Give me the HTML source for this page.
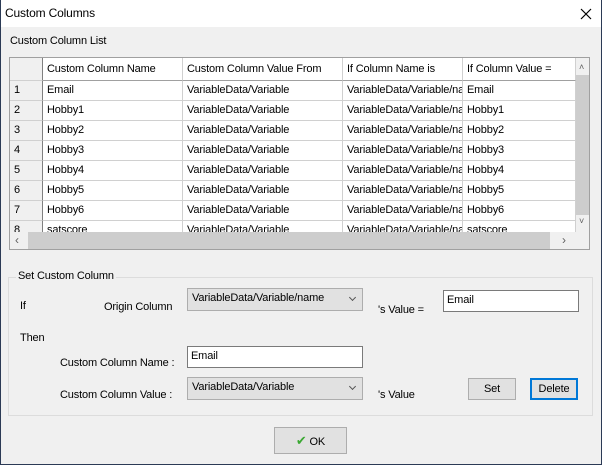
<!DOCTYPE html>
<html><head><style>
*{margin:0;padding:0;box-sizing:border-box}
body{width:602px;height:465px;background:#f0f0f0;font-family:"Liberation Sans",sans-serif;font-size:11px;letter-spacing:-0.15px;color:#000;position:relative;overflow:hidden}
.a{position:absolute;white-space:nowrap}
.win{position:absolute;left:0;top:0;width:602px;height:465px;border:1px solid #2b3a55;border-top:none}
.title{position:absolute;left:1px;top:0;width:600px;height:27px;background:#fff}
.grid{position:absolute;left:9px;top:57px;width:581px;height:193px;border:1px solid #a0a0a0;background:#fff;overflow:hidden}
.c{position:absolute;height:20px;line-height:19px;padding-left:4px;border-right:1px solid #d0d0d0;border-bottom:1px solid #d0d0d0;overflow:hidden;white-space:nowrap}
.h{background:#fff}
.rn{background:#f0f0f0;border-right:1px solid #808080}
.btn{position:absolute;background:#e1e1e1;border:1px solid #adadad;text-align:center}
.tb{position:absolute;background:#fff;border:1px solid #7a7a7a;padding-left:3px;line-height:18px}
.cb{position:absolute;background:#e1e1e1;border:1px solid #adadad;padding-left:4px;line-height:19px}
.cb:after{content:"";position:absolute;right:7px;top:6px;width:4px;height:4px;border-right:1px solid #555;border-bottom:1px solid #555;transform:rotate(45deg)}
</style></head><body>
<div class="win"></div>
<div class="title"></div>
<div class="a" style="left:5px;top:6px;font-size:12px">Custom Columns</div>
<svg class="a" style="left:580px;top:8px" width="12" height="12"><path d="M1 1L11 11M11 1L1 11" stroke="#000" stroke-width="1.2"/></svg>
<div class="a" style="left:10px;top:35px">Custom Column List</div>
<div class="grid">
<div class="c rn" style="left:0;top:0;width:33px;height:23px"></div>
<div class="c h" style="left:33px;top:0;width:140px;height:23px;line-height:23px;border-bottom:1px solid #a0a0a0">Custom Column Name</div>
<div class="c h" style="left:173px;top:0;width:160px;height:23px;line-height:23px;border-bottom:1px solid #a0a0a0">Custom Column Value From</div>
<div class="c h" style="left:333px;top:0;width:120px;height:23px;line-height:23px;border-bottom:1px solid #a0a0a0">If Column Name is</div>
<div class="c h" style="left:453px;top:0;width:113px;height:23px;line-height:23px;border-bottom:1px solid #a0a0a0">If Column Value =</div>
<div id="rows"></div>
<div class="a" style="left:566px;top:0;width:14px;height:174px;background:#f0f0f0"></div>
<div class="a" style="left:566px;top:17px;width:14px;height:140px;background:#cdcdcd"></div>
<div class="a" style="left:569px;top:4px;font-size:9px;color:#606060">&#708;</div>
<div class="a" style="left:569px;top:158px;font-size:9px;color:#606060">&#709;</div>
<div class="a" style="left:0;top:174px;width:580px;height:17px;background:#f0f0f0"></div>
<div class="a" style="left:18px;top:174px;width:522px;height:17px;background:#cdcdcd"></div>
<div class="a" style="left:5px;top:175px;font-size:12px;color:#606060">&#8249;</div>
<div class="a" style="left:552px;top:175px;font-size:12px;color:#606060">&#8250;</div>
</div>
<script>
var n=["Email","Hobby1","Hobby2","Hobby3","Hobby4","Hobby5","Hobby6","satscore"],h="";
for(var i=0;i<8;i++){var t=23+i*20;
h+='<div class="c rn" style="left:0;top:'+t+'px;width:33px">'+(i+1)+'</div>'+
'<div class="c" style="left:33px;top:'+t+'px;width:140px">'+n[i]+'</div>'+
'<div class="c" style="left:173px;top:'+t+'px;width:160px">VariableData/Variable</div>'+
'<div class="c" style="left:333px;top:'+t+'px;width:120px">VariableData/Variable/name</div>'+
'<div class="c" style="left:453px;top:'+t+'px;width:113px">'+n[i]+'</div>';}
document.getElementById("rows").innerHTML=h;
</script>
<div class="a" style="left:8px;top:277px;width:585px;height:139px;border:1px solid #dcdcdc"></div>
<div class="a" style="left:16px;top:270px;background:#f0f0f0;padding:0 2px">Set Custom Column</div>
<div class="a" style="left:20px;top:300px">If</div>
<div class="a" style="left:104px;top:301px">Origin Column</div>
<div class="cb" style="left:187px;top:288px;width:176px;height:23px">VariableData/Variable/name</div>
<div class="a" style="left:378px;top:304px">'s Value =</div>
<div class="tb" style="left:443px;top:290px;width:136px;height:22px">Email</div>
<div class="a" style="left:20px;top:332px">Then</div>
<div class="a" style="left:60px;top:357px">Custom Column Name :</div>
<div class="tb" style="left:187px;top:346px;width:176px;height:22px">Email</div>
<div class="a" style="left:60px;top:389px">Custom Column Value :</div>
<div class="cb" style="left:187px;top:377px;width:176px;height:23px">VariableData/Variable</div>
<div class="a" style="left:378px;top:389px">'s Value</div>
<div class="btn" style="left:468px;top:378px;width:48px;height:22px;line-height:20px">Set</div>
<div class="btn" style="left:530px;top:378px;width:48px;height:22px;line-height:18px;border:2px solid #0078d7">Delete</div>
<div class="btn" style="left:274px;top:427px;width:73px;height:27px;line-height:25px"><span style="color:#3aa832;font-size:13px">&#10004;</span> OK</div>
</body></html>
